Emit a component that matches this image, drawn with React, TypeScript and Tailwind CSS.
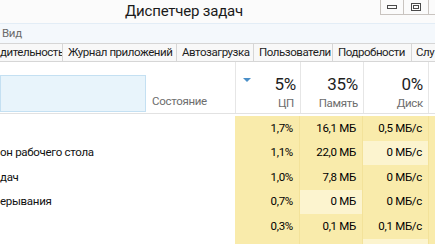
import React from 'react'

type Row = {
  name: string
  cpu: string
  mem: string
  disk: string
  memLight?: boolean
  diskLight?: boolean
}

const rows: Row[] = [
  { name: '', cpu: '1,7%', mem: '16,1 МБ', disk: '0,5 МБ/с' },
  { name: 'он рабочего стола', cpu: '1,1%', mem: '22,0 МБ', disk: '0 МБ/с', diskLight: true },
  { name: 'дач', cpu: '1,0%', mem: '7,8 МБ', disk: '0 МБ/с' },
  { name: 'ерывания', cpu: '0,7%', mem: '0 МБ', disk: '0 МБ/с', memLight: true },
  { name: '', cpu: '0,3%', mem: '0,1 МБ', disk: '0,1 МБ/с' },
  { name: '', cpu: '', mem: '', disk: '', diskLight: true },
]

const tabs = [
  { label: 'дительность', w: 'w-[63px]', pl: 'pl-0' },
  { label: 'Журнал приложений', w: 'w-[114px]', pl: 'pl-[5px]' },
  { label: 'Автозагрузка', w: 'w-[77px]', pl: 'pl-[5px]' },
  { label: 'Пользователи', w: 'w-[79px]', pl: 'pl-[5px]' },
  { label: 'Подробности', w: 'w-[79px]', pl: 'pl-[5px]' },
  { label: 'Слу', w: 'w-[40px]', pl: 'pl-[4px]' },
]

const App = () => {
  return (
    <div className="w-[435px] h-[244px] overflow-hidden bg-white text-[11.5px] tracking-[-0.3px] text-black flex flex-col" style={{ fontFamily: 'Roboto, "Noto Sans", sans-serif' }}>
      {/* title bar */}
      <div className="h-[23px] flex shrink-0 bg-[#fbfbfb]">
        <p className="pl-[125px] pt-[2px] text-[15px] leading-[18px] tracking-[-0.2px] text-[#1a1a1a]">Диспетчер задач</p>
        <div className="ml-auto flex h-[15px] border-l border-b border-[#c9c4c0]">
          <div className="w-[23px] flex items-center justify-center border-r border-[#c9c4c0]">
            <span className="block w-[10px] h-[4px] border border-[#4a4a4a]"></span>
          </div>
          <div className="w-[25px] flex items-center justify-center border-r border-[#c9c4c0]">
            <span className="flex items-center justify-center w-[10px] h-[8px] border border-[#4a4a4a]">
              <span className="block w-[6px] h-[4px] border border-[#4a4a4a]"></span>
            </span>
          </div>
          <div className="w-[6px]"></div>
        </div>
      </div>

      {/* menu bar */}
      <div className="h-[20px] shrink-0 flex items-center bg-[#f4f8fc] border-t border-[#e3edf6]">
        <span className="pl-[2px] text-[#6b6b6b] leading-none">Вид</span>
      </div>

      {/* tabs */}
      <div className="h-[19px] shrink-0 flex border-b border-[#d6d6d6] bg-white">
        {tabs.map((t) => (
          <div key={t.label} className={`${t.w} ${t.pl} shrink-0 h-full flex items-center border-t border-r border-[#d6d6d6] bg-[#f8f8f8] whitespace-nowrap overflow-hidden text-[#1e1e1e] leading-none tracking-[-0.45px]`}>
            {t.label}
          </div>
        ))}
      </div>

      {/* column header */}
      <div className="h-[52px] shrink-0 flex border-b border-[#e2e2e2] text-[#6d6d6d]">
        <div className="w-[146px] shrink-0 flex items-end pb-[1px]">
          <div className="w-full h-[37px] bg-[#e8f4fb] border border-[#c4e0f2]"></div>
        </div>
        <div className="w-[89px] shrink-0 flex items-end pl-[6px] pb-[3px]">Состояние</div>
        <div className="w-[65px] shrink-0 relative border-l border-[#e6e6e6] flex flex-col items-end pr-[4px] pt-[12px]">
          <svg className="absolute left-[7px] top-[16px]" width="8" height="4" viewBox="0 0 8 4">
            <path d="M0 0 L8 0 L4 4 Z" fill="#4a8fc8" />
          </svg>
          <span className="text-[17px] leading-[20px] text-[#1e1e1e]">5%</span>
          <span className="leading-[18px] pr-[2px]">ЦП</span>
        </div>
        <div className="w-[63px] shrink-0 border-l border-[#e6e6e6] flex flex-col items-end pr-[5px] pt-[12px]">
          <span className="text-[17px] leading-[20px] text-[#1e1e1e]">35%</span>
          <span className="leading-[18px]">Память</span>
        </div>
        <div className="w-[65px] shrink-0 border-l border-[#e6e6e6] flex flex-col items-end pr-[5px] pt-[12px]">
          <span className="text-[17px] leading-[20px] text-[#1e1e1e]">0%</span>
          <span className="leading-[18px]">Диск</span>
        </div>
        <div className="flex-1 border-l border-[#e6e6e6]"></div>
      </div>

      {/* rows */}
      <div className="flex flex-col pt-[2px]">
        {rows.map((r, i) => (
          <div key={i} className="h-[24.5px] shrink-0 flex">
            <div className="w-[146px] shrink-0 flex items-center whitespace-nowrap text-[#111]">{r.name}</div>
            <div className="w-[89px] shrink-0"></div>
            <div className="w-[65px] shrink-0 flex items-center justify-end pr-[6px] bg-[#f9ebab] border-r border-[#f3e29a]">{r.cpu}</div>
            <div className={`w-[63px] shrink-0 flex items-center justify-end pr-[6px] border-r border-[#f3e29a] ${r.memLight ? 'bg-[#fcf4cf]' : 'bg-[#f9ebab]'}`}>{r.mem}</div>
            <div className={`w-[65px] shrink-0 flex items-center justify-end pr-[6px] ${r.diskLight ? 'bg-[#fcf4cf]' : 'bg-[#f9ebab]'}`}>{r.disk}</div>
            <div className="flex-1 bg-[#f9ebab] border-l border-[#f3e29a]"></div>
          </div>
        ))}
      </div>
    </div>
  )
}

export default App
